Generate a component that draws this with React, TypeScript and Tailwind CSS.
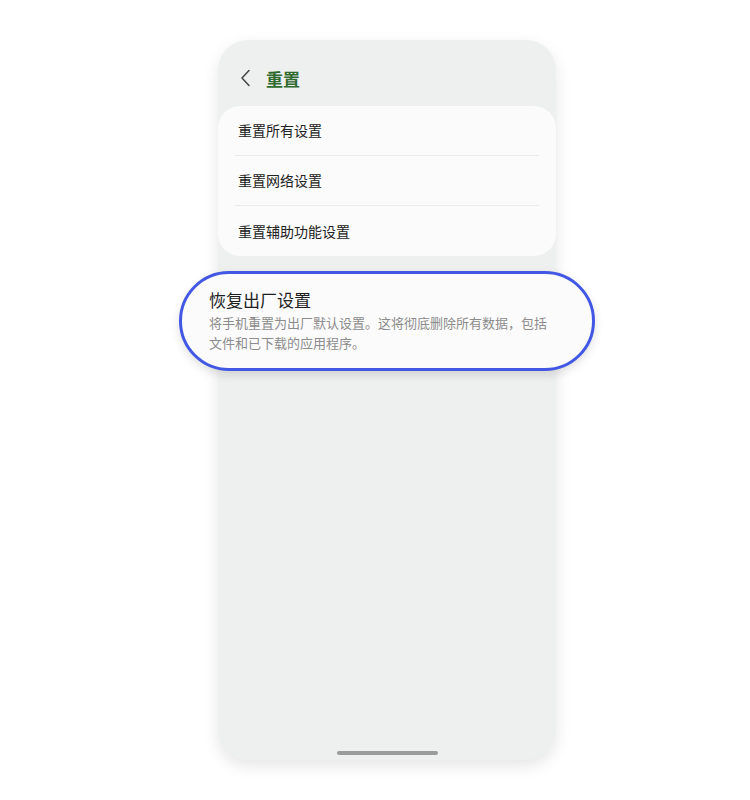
import React from 'react';

const items = ['重置所有设置', '重置网络设置', '重置辅助功能设置'];

export default function App() {
    return (
        <div className="min-h-screen bg-white pt-10 pl-[218px]" style={{ fontFamily: '"Noto Sans CJK SC", "Noto Sans", sans-serif' }}>
            {/* Phone frame */}
            <div className="relative w-[338px] h-[720px] rounded-[30px] bg-[#eef0ef] shadow-[0_6px_16px_rgba(0,0,0,0.10)] flex flex-col">
                {/* Header */}
                <div className="h-[66px] flex items-center pl-[22px] gap-[14px] pt-[10px]">
                    <svg width="12" height="18" viewBox="0 0 12 18" fill="none" className="text-[#444]">
                        <path d="M9 1.5 L2 9 L9 16.5" stroke="currentColor" strokeWidth="1.5" strokeLinecap="round" strokeLinejoin="round" />
                    </svg>
                    <span className="text-[17px] font-bold text-[#2f6a2f] leading-none">重置</span>
                </div>

                {/* Reset options */}
                <div className="bg-[#fbfbfb] rounded-[22px]">
                    {items.map((label, i) => (
                        <div key={label} className="mx-[17px]">
                            <div className={`h-[50px] flex items-center pl-[3px] text-[14px] text-[#222] ${i < items.length - 1 ? 'border-b border-[#ebebeb]' : ''}`}>
                                {label}
                            </div>
                        </div>
                    ))}
                </div>

                {/* Factory reset, highlighted */}
                <div className="-mx-[39px] mt-[15px] h-[100px] rounded-full border-[3px] border-[#4258e4] bg-[#fbfbfb] shadow-[0_4px_10px_rgba(0,0,0,0.12)] flex flex-col justify-center pl-[27px] pr-[44px]">
                    <div className="text-[17px] text-[#1f1f1f] leading-[22px]">恢复出厂设置</div>
                    <div className="text-[13px] text-[#8c8c8c] leading-[20px] mt-[2px]">
                        将手机重置为出厂默认设置。这将彻底删除所有数据，包括文件和已下载的应用程序。
                    </div>
                </div>

                <div className="flex-1" />

                {/* Home indicator */}
                <div className="flex justify-center pb-[5px]">
                    <div className="w-[101px] h-[4px] rounded-full bg-[#9a9c9b]" />
                </div>
            </div>
        </div>
    );
}
